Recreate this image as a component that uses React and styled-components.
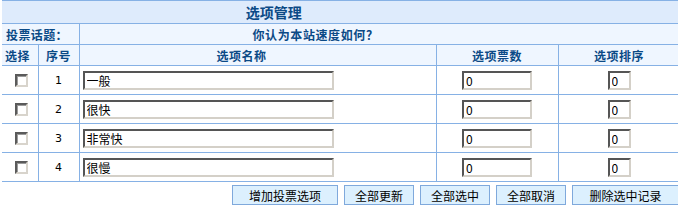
import React from 'react'
import styled, { createGlobalStyle } from 'styled-components'

const GlobalStyle = createGlobalStyle`
    html, body {
        margin: 0;
        padding: 0;
        background: #ffffff;
        overflow: hidden;
        font-family: "Noto Sans CJK SC", "Noto Sans", sans-serif;
        font-size: 12px;
    }
`

const Wrapper = styled.div`
    width: 678px;
    margin-left: 2px;
`

const Table = styled.table`
    width: 678px;
    border-collapse: collapse;
    table-layout: fixed;
    border-top: 1px solid #86b1e5;

    td, th {
        border: 1px solid #86b1e5;
        padding: 0;
    }
    tr > :first-child {
        border-left: none;
    }
`

const TitleCell = styled.th`
    height: 22px;
    background: #deebfc;
    color: #0b4a86;
    font-size: 14px;
    font-weight: bold;
    text-align: center;
    padding-right: 134px !important;
`

const LabelCell = styled.td`
    height: 20px;
    background: #eff6ff;
    color: #0b4a86;
    font-weight: bold;
    padding-left: 4px !important;
    letter-spacing: 0.4px;
`

const QuestionCell = styled.td`
    background: #eff6ff;
    color: #0b4a86;
    font-weight: bold;
    text-align: center;
    letter-spacing: 0.6px;
    padding-right: 128px !important;
`

const HeadCell = styled.th`
    height: 20px;
    background: #eff6ff;
    color: #0b4a86;
    font-weight: bold;
    text-align: ${p => (p.$left ? 'left' : 'center')};
    padding-left: ${p => (p.$left ? '3px' : '0')} !important;
    padding-right: ${p => p.$shift || 0}px !important;
    letter-spacing: 0.5px;
`

const Cell = styled.td`
    height: 28px;
    background: #ffffff;
    text-align: ${p => p.$align || 'center'};
    padding-left: ${p => (p.$align === 'left' ? '3px' : '0')} !important;
    color: #000;
    font-family: "DejaVu Sans", "Noto Sans", sans-serif;
    font-size: 11px;
`

const Check = styled.input.attrs({ type: 'checkbox' })`
    appearance: none;
    display: block;
    margin: 0 0 0 10px;
    width: 13px;
    height: 13px;
    box-sizing: border-box;
    background: #fff;
    border-style: solid;
    border-width: 2px;
    border-color: #5a5a5a #d8d4cc #d8d4cc #5a5a5a;
    box-shadow: inset 1px 1px 0 #9a9a9a;
`

const TextBox = styled.input`
    box-sizing: border-box;
    width: ${p => p.$w}px;
    height: 19px;
    margin: 0;
    padding: 0 0 0 2px;
    display: ${p => (p.$block ? 'block' : 'inline-block')};
    vertical-align: middle;
    background: #fff;
    border-style: solid;
    border-width: 2px;
    border-color: #555555 #d4d0c8 #d4d0c8 #555555;
    font-family: "Noto Sans CJK SC", "DejaVu Sans", sans-serif;
    font-size: 12px;
    color: #000;
    outline: none;
`

const ButtonBar = styled.div`
    display: flex;
    justify-content: flex-end;
    gap: 6px;
    padding-top: 3px;
    padding-right: 1px;
`

const Button = styled.button`
    width: ${p => p.$w}px;
    height: 20px;
    margin: 0;
    padding: 0;
    background: #dcf0fe;
    border: 1px solid #7fa9dc;
    font-family: "Noto Sans CJK SC", sans-serif;
    font-size: 12px;
    color: #000;
    cursor: pointer;
`

const options = ['一般', '很快', '非常快', '很慢']

const App = () => {
  return (
    <Wrapper>
      <GlobalStyle />
      <Table>
        <colgroup>
          <col style={{ width: 36 }} />
          <col style={{ width: 41 }} />
          <col style={{ width: 357 }} />
          <col style={{ width: 122 }} />
          <col style={{ width: 122 }} />
        </colgroup>
        <tbody>
          <tr>
            <TitleCell colSpan={5}>选项管理</TitleCell>
          </tr>
          <tr>
            <LabelCell colSpan={2}>投票话题：</LabelCell>
            <QuestionCell colSpan={3}>你认为本站速度如何？</QuestionCell>
          </tr>
          <tr>
            <HeadCell $left>选择</HeadCell>
            <HeadCell>序号</HeadCell>
            <HeadCell $shift={32}>选项名称</HeadCell>
            <HeadCell>选项票数</HeadCell>
            <HeadCell>选项排序</HeadCell>
          </tr>
          {options.map((name, i) => (
            <tr key={name}>
              <Cell $align="left"><Check /></Cell>
              <Cell>{i + 1}</Cell>
              <Cell $align="left"><TextBox $w={251} $block defaultValue={name} /></Cell>
              <Cell><TextBox $w={70} defaultValue="0" /></Cell>
              <Cell><TextBox $w={23} defaultValue="0" /></Cell>
            </tr>
          ))}
        </tbody>
      </Table>
      <ButtonBar>
        <Button $w={106}>增加投票选项</Button>
        <Button $w={70}>全部更新</Button>
        <Button $w={70}>全部选中</Button>
        <Button $w={70}>全部取消</Button>
        <Button $w={107}>删除选中记录</Button>
      </ButtonBar>
    </Wrapper>
  )
}

export default App
